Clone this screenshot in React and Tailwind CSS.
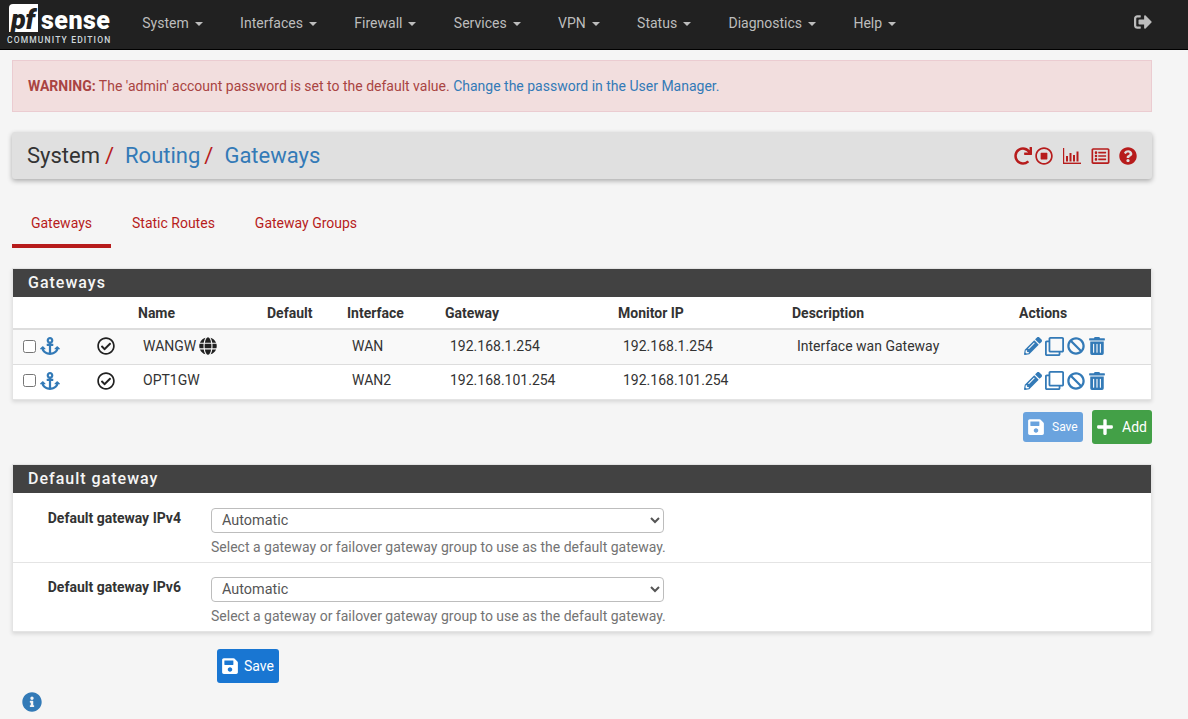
import React from "react";
import {
  FaSignOutAlt, FaRedo, FaRegStopCircle, FaRegListAlt, FaQuestionCircle, FaAnchor, FaRegCheckCircle,
  FaGlobe, FaPencilAlt, FaRegClone, FaBan, FaTrashAlt, FaSave, FaPlus, FaInfoCircle,
} from "react-icons/fa";

const NAV = ["System", "Interfaces", "Firewall", "Services", "VPN", "Status", "Diagnostics", "Help"];

function Logo() {
  return (
    <div className="w-[106px] ml-[7px] flex flex-col select-none">
      <div className="flex items-start h-[32px] w-full pl-[2px]">
        <div className="w-[29px] h-[28px] bg-white rounded-tl-[4px] flex items-end justify-center">
          <span className="text-[#212121] italic font-black text-[27px] leading-[24px] tracking-[0px] pr-[1px]">pf</span>
        </div>
        <span className="text-white font-black text-[25px] leading-[24px] ml-[3px] tracking-[0.5px] mt-[5px]">sense</span>
      </div>
      <div className="text-[#cfd8dc] text-[8.5px] leading-[9px] tracking-[1.15px] font-medium whitespace-nowrap">COMMUNITY EDITION</div>
    </div>
  );
}

function BarIcon() {
  return (
    <svg viewBox="0 0 18 16" className="w-[18px] h-[16px]" fill="currentColor">
      <rect x="0" y="0" width="1.2" height="16" />
      <rect x="0" y="14.6" width="18" height="1.4" />
      <rect x="3" y="8" width="2" height="5.5" />
      <rect x="6.5" y="5" width="2" height="8.5" />
      <rect x="10" y="7" width="2" height="6.5" />
      <rect x="13.5" y="3.5" width="2" height="10" />
    </svg>
  );
}

function Panel({ title, children, className = "" }) {
  return (
    <section className={`mx-[12px] w-[1140px] border border-[#e4e4e4] bg-white shadow-[0_2px_4px_rgba(0,0,0,0.12)] ${className}`}>
      <h2 className="h-[28px] bg-[#424242] text-[#f5f5f5] text-[16px] font-medium tracking-[1px] leading-[28px] pl-[15px]">{title}</h2>
      {children}
    </section>
  );
}

function Row({ name, globe, iface, gw, mon, desc, striped, lift }) {
  const cell = `pl-[10px] align-middle ${lift ? "pb-[2px]" : "pb-[1px]"}`;
  return (
    <tr className={`h-[35px] border-t border-[#dddddd] ${striped ? "bg-[#f9f9f9]" : "bg-white"}`}>
      <td className={cell}>
        <div className="flex items-center gap-[4px]">
          <input type="checkbox" className="w-[13px] h-[13px] m-0" readOnly />
          <FaAnchor className="text-[#337ab7] w-[20px] h-[20px]" />
        </div>
      </td>
      <td className={cell}><FaRegCheckCircle className="text-[#212121] w-[18px] h-[18px]" /></td>
      <td className={cell}>
        <span className="inline-flex items-center gap-[3px]">{name}{globe && <FaGlobe className="text-[#212121] w-[18px] h-[18px]" />}</span>
      </td>
      <td></td>
      <td className={cell}>{iface}</td>
      <td className={cell}>{gw}</td>
      <td className={cell}>{mon}</td>
      <td className={cell}>{desc}</td>
      <td className={cell}>
        <div className="flex items-center gap-[3px] text-[#337ab7]">
          <FaPencilAlt className="w-[18px] h-[18px]" />
          <FaRegClone className="w-[19px] h-[19px]" />
          <FaBan className="w-[18px] h-[18px]" />
          <FaTrashAlt className="w-[18px] h-[18px]" />
        </div>
      </td>
    </tr>
  );
}

function GatewayField({ label, last }) {
  return (
    <div className={last ? "flex h-[68px]" : "flex h-[70px] border-b border-[#e4e4e4]"}>
      <label className={`w-[168px] text-right font-bold leading-[20px] text-[#333] shrink-0 ${last ? "pt-[14px]" : "pt-[15px]"}`}>{label}</label>
      <div className={`pl-[30px] ${last ? "pt-[14px]" : "pt-[15px]"}`}>
        <select className="block w-[453px] h-[25px] border border-[#bdbdbd] rounded-[4px] bg-white pl-[6px] text-[14.4px] text-[#555]">
          <option>Automatic</option>
        </select>
        <p className="text-[#737373] text-[14px] leading-[20px] mt-[4px]">Select a gateway or failover gateway group to use as the default gateway.</p>
      </div>
    </div>
  );
}

export default function App() {
  return (
    <div className="w-[1188px] h-[719px] overflow-hidden bg-[#f5f5f5] font-['Roboto',sans-serif] text-[14px] text-[#333]">
      <nav className="h-[50px] bg-[#212121] border-b border-black flex items-center">
        <Logo />
        <ul className="flex ml-[10.6px] mb-[2px] text-[#bdbdbd] text-[14px]">
          {NAV.map((n) => (
            <li key={n} className="flex items-center px-[18.7px] whitespace-nowrap">
              {n}
              <span className="ml-[6px] w-0 h-0 border-x-[4px] border-x-transparent border-t-[4px] border-t-[#bdbdbd]"></span>
            </li>
          ))}
        </ul>
        <FaSignOutAlt className="ml-auto mr-[36px] mb-[5px] text-[#bdbdbd] w-[18px] h-[18px]" />
      </nav>

      <div className="mx-[12px] mt-[10px] w-[1140px] h-[52px] bg-[#f2dede] border border-[#ebccd1] text-[#a94442] pl-[15px] flex items-center">
        <span><strong className="font-bold">WARNING:</strong> The 'admin' account password is set to the default value. <a className="text-[#337ab7]">Change the password in the User Manager.</a></span>
      </div>

      <header className="mx-[12px] mt-[20px] w-[1140px] h-[47px] bg-[#e0e0e0] rounded-[3px] shadow-[0_2px_5px_rgba(0,0,0,0.3)] flex items-center pl-[15px] pr-[15px]">
        <h1 className="text-[22px] text-[#333] font-normal flex items-center whitespace-nowrap">
          <span>System</span><span className="text-[#b71c1c] ml-[5px]">/</span>
          <span className="text-[#337ab7] ml-[11px]">Routing</span><span className="text-[#b71c1c] ml-[4px]">/</span>
          <span className="text-[#337ab7] ml-[11px]">Gateways</span>
        </h1>
        <div className="ml-auto flex items-center text-[#b71c1c]">
          <FaRedo className="w-[18px] h-[18px]" />
          <FaRegStopCircle className="w-[18px] h-[18px] ml-[3px]" />
          <span className="ml-[10px]"><BarIcon /></span>
          <FaRegListAlt className="w-[19px] h-[18px] ml-[10px]" />
          <FaQuestionCircle className="w-[18px] h-[18px] ml-[9px]" />
        </div>
      </header>

      <div className="mx-[12px] mt-[21px] flex h-[48px] text-[#b71c1c] text-[14px]">
        <div className="w-[99px] flex items-center justify-center border-b-[4px] border-[#b71c1c] pt-[2px]">Gateways</div>
        <div className="flex items-center pl-[21px] pb-[2px]">Static Routes</div>
        <div className="flex items-center pl-[40px] pb-[2px]">Gateway Groups</div>
      </div>

      <Panel title="Gateways" className="mt-[20px]">
        <table className="w-full table-fixed border-collapse text-[14px]">
          <colgroup>
            <col className="w-[74px]" /><col className="w-[46px]" /><col className="w-[129px]" /><col className="w-[80px]" />
            <col className="w-[98px]" /><col className="w-[173px]" /><col className="w-[174px]" /><col className="w-[227px]" /><col />
          </colgroup>
          <thead>
            <tr className="h-[32px] border-b-[2px] border-[#dddddd] text-left">
              <th></th><th></th>
              <th className="pl-[5px] pt-[2px] font-bold">Name</th><th className="pl-[5px] pt-[2px] font-bold">Default</th><th className="pl-[5px] pt-[2px] font-bold">Interface</th>
              <th className="pl-[5px] pt-[2px] font-bold">Gateway</th><th className="pl-[5px] pt-[2px] font-bold">Monitor IP</th><th className="pl-[5px] pt-[2px] font-bold">Description</th><th className="pl-[5px] pt-[2px] font-bold">Actions</th>
            </tr>
          </thead>
          <tbody>
            <Row striped name="WANGW" globe iface="WAN" gw="192.168.1.254" mon="192.168.1.254" desc="Interface wan Gateway" />
            <Row lift name="OPT1GW" iface="WAN2" gw="192.168.101.254" mon="192.168.101.254" desc="" />
          </tbody>
        </table>
      </Panel>

      <div className="mx-[12px] w-[1140px] mt-[10px] h-[34px] flex justify-end items-center gap-[9px]">
        <button className="w-[60px] h-[30px] rounded-[3px] bg-[#6aa3de] text-white text-[12px] flex items-center pl-[4px] gap-[7px]"><FaSave className="w-[18px] h-[18px]" /><span>Save</span></button>
        <button className="w-[60px] h-[34px] rounded-[3px] bg-[#43a047] text-white text-[14px] flex items-center pl-[4px] gap-[8px]"><FaPlus className="w-[18px] h-[18px]" /><span>Add</span></button>
      </div>

      <Panel title="Default gateway" className="mt-[20px]">
        <GatewayField label="Default gateway IPv4" />
        <GatewayField label="Default gateway IPv6" last />
      </Panel>

      <div className="mt-[17px] ml-[217px]">
        <button className="w-[62px] h-[34px] rounded-[3px] bg-[#1976d2] text-white text-[14px] flex items-center pl-[4px] gap-[5px]"><FaSave className="w-[18px] h-[18px]" /><span>Save</span></button>
      </div>
      <div className="ml-[22px] mt-[9px]"><FaInfoCircle className="text-[#337ab7] w-[20px] h-[20px]" /></div>
    </div>
  );
}
